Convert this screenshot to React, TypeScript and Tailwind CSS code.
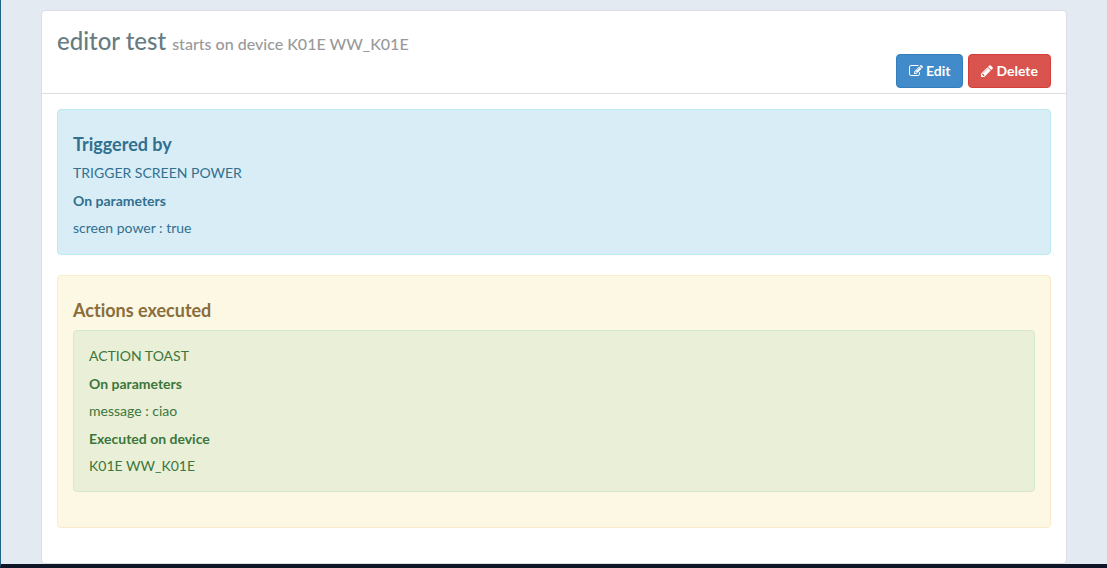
import type { ReactNode } from 'react';

function EditIcon() {
  return (
    <svg viewBox="0 0 1792 1792" className="size-3.5 fill-current" aria-hidden="true">
      <path d="M888 1184l116-116-152-152-116 116v56h96v96h56zm440-720q-16-16-33 1l-350 350q-17 17-1 33t33-1l350-350q17-17 1-33zm80 594v190q0 119-84.5 203.5t-203.5 84.5h-832q-119 0-203.5-84.5t-84.5-203.5v-832q0-119 84.5-203.5t203.5-84.5h832q63 0 117 25 15 7 18 23 3 17-9 29l-49 49q-14 14-32 8-23-6-45-6h-832q-66 0-113 47t-47 113v832q0 66 47 113t113 47h832q66 0 113-47t47-113v-126q0-13 9-22l64-64q15-15 35-7t20 29zm-96-738l288 288-672 672h-288v-288zm444 132l-92 92-288-288 92-92q28-28 68-28t68 28l152 152q28 28 28 68t-28 68z" />
    </svg>
  );
}

function PencilIcon() {
  return (
    <svg viewBox="128 0 1536 1792" className="h-3.5 w-3 fill-current" aria-hidden="true">
      <path d="M491 1536l91-91-235-235-91 91v107h128v128h107zm523-928q0-22-22-22-10 0-17 7l-542 542q-7 7-7 17 0 22 22 22 10 0 17-7l542-542q7-7 7-17zm-54-192l416 416-832 832h-416v-416zm683 96q0 53-37 90l-166 166-416-416 166-165q36-38 90-38 53 0 91 38l235 234q37 39 37 91z" />
    </svg>
  );
}

function Detail({ children }: { children: ReactNode }) {
  return <p className="mt-[7px] text-sm leading-5">{children}</p>;
}

function Label({ children }: { children: ReactNode }) {
  return <h3 className="mt-2 text-sm leading-5 font-bold">{children}</h3>;
}

export default function App() {
  return (
    <div className="flex min-h-screen flex-col border-b-4 border-l border-b-[#0e1628] border-l-[#1f6388] bg-[#e4eaf2] px-10 pt-2.5 font-['Lato','Liberation_Sans',sans-serif] [font-variant-ligatures:no-common-ligatures]">
      <main className="grow rounded border border-[#dcdde0] bg-white">
        <header className="border-b border-[#dddddd] px-[15px] pt-5 pb-[5px]">
          <h1 className="text-2xl leading-5 font-medium text-[#667c82]">
            editor test <small className="text-base leading-5 text-[#999999]">starts on device K01E WW_K01E</small>
          </h1>
          <div className="flex justify-end gap-[5px]">
            <button type="button" className="flex h-[34px] items-center gap-[3px] rounded border border-[#357ebd] bg-[#428bca] px-3 text-sm font-bold text-white">
              <EditIcon />
              Edit
            </button>
            <button type="button" className="flex h-[34px] items-center gap-[3px] rounded border border-[#d43f3a] bg-[#d9534f] px-3 text-sm font-bold text-white">
              <PencilIcon />
              Delete
            </button>
          </div>
        </header>
        <div className="flex flex-col gap-5 p-[15px] pb-[35px]">
          <section className="rounded border border-[#bce8f1] bg-[#d9edf7] px-[15px] pt-[22px] pb-4 text-[#31708f]">
            <h2 className="text-lg leading-6 font-bold">Triggered by</h2>
            <Detail>TRIGGER SCREEN POWER</Detail>
            <Label>On parameters</Label>
            <Detail>screen power : true</Detail>
          </section>
          <section className="rounded border border-[#faebcc] bg-[#fcf8e3] px-[15px] pt-[22px] pb-[35px] text-[#8a6d3b]">
            <h2 className="text-lg leading-6 font-bold">Actions executed</h2>
            <div className="mt-2 rounded border border-[#d6e9c6] bg-[#eaefd7] px-[15px] pt-2 pb-[15px] text-[#3c763d]">
              <Detail>ACTION TOAST</Detail>
              <Label>On parameters</Label>
              <Detail>message : ciao</Detail>
              <Label>Executed on device</Label>
              <Detail>K01E WW_K01E</Detail>
            </div>
          </section>
        </div>
      </main>
    </div>
  );
}
